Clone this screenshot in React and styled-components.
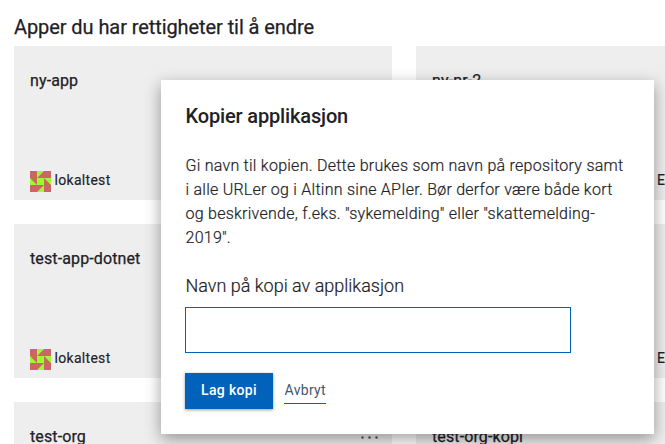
import React from 'react';
import styled, { createGlobalStyle } from 'styled-components';

const GlobalStyle = createGlobalStyle`
  *, *::before, *::after { box-sizing: border-box; }
  body {
    margin: 0;
    background: #fff;
    color: #1e2126;
    font-family: Roboto, "Liberation Sans", sans-serif;
    overflow: hidden;
  }
`;

const Page = styled.main`
  position: relative;
  width: 665px;
  height: 444px;
  overflow: hidden;
  padding: 15px 0 0 14px;
`;

const PageTitle = styled.h2`
  margin: 0 0 7px;
  font-size: 20px;
  font-weight: 400;
  line-height: 24px;
  letter-spacing: -0.08px;
  -webkit-text-stroke: 0.25px currentColor;
`;

const CardGrid = styled.div`
  display: grid;
  grid-template-columns: 378px 378px;
  grid-auto-rows: 154px;
  gap: 24px;
`;

const Card = styled.article`
  display: flex;
  flex-direction: column;
  justify-content: space-between;
  padding: 23px 14px 7px 16px;
  background: #eee;
`;

const CardHeader = styled.div`
  display: flex;
  justify-content: space-between;
  align-items: center;
`;

const CardName = styled.h3`
  margin: 0;
  font-size: 16px;
  font-weight: 400;
  line-height: 24px;
  letter-spacing: 0.12px;
  -webkit-text-stroke: 0.25px currentColor;
`;

const CardFooter = styled.div`
  display: flex;
  align-items: center;
  justify-content: ${(p) => (p.$end ? 'flex-end' : 'flex-start')};
  gap: 3.5px;
  height: 24px;
`;

const Owner = styled.span`
  margin-top: -3px;
  font-size: 14px;
  font-weight: 400;
  line-height: 20px;
  letter-spacing: 0.3px;
  -webkit-text-stroke: 0.15px currentColor;
`;

const EditedBy = styled(Owner)`
  width: 123px;
`;

const Dialog = styled.section`
  position: absolute;
  left: 161px;
  top: 80px;
  width: 493px;
  height: 354px;
  padding: 24px;
  background: #fff;
  box-shadow: 0 5px 15px rgba(0, 0, 0, 0.38);
`;

const DialogTitle = styled.h1`
  margin: 0 0 0 0.5px;
  font-size: 20px;
  font-weight: 500;
  line-height: 24px;
  letter-spacing: -0.15px;
`;

const Description = styled.p`
  margin: 26px 0 0 0.5px;
  font-size: 16px;
  font-weight: 300;
  line-height: 24px;
  letter-spacing: 0.25px;
  white-space: nowrap;
  -webkit-text-stroke: 0.2px currentColor;
`;

const Label = styled.label`
  display: block;
  margin: 24px 0 0 0.5px;
  font-size: 18px;
  font-weight: 300;
  line-height: 24px;
  -webkit-text-stroke: 0.2px currentColor;
`;

const Input = styled.input`
  display: block;
  width: 386px;
  height: 46px;
  margin: 9px 0 20px;
  border: 1px solid #0062ba;
  border-radius: 0;
  background: #fff;
  outline: none;
`;

const Actions = styled.div`
  display: flex;
  gap: 11px;
`;

const PrimaryButton = styled.button`
  width: 88px;
  height: 36px;
  padding: 0 0 2px;
  border: 0;
  background: #0062ba;
  color: #fff;
  font: 500 14px/34px Roboto, sans-serif;
  letter-spacing: 0.35px;
  box-shadow: 0 1px 3px rgba(0, 0, 0, 0.4);
`;

const CancelLink = styled.button`
  align-self: flex-start;
  width: 42px;
  height: 22px;
  margin-top: 9px;
  padding: 0 0 4px 0.5px;
  border: 0;
  border-bottom: 1px solid #0062ba;
  background: none;
  color: #3f5871;
  font: 400 14px/17px Roboto, sans-serif;
  letter-spacing: 0.3px;
  white-space: nowrap;
`;

const Identicon = () => (
  <svg width="21" height="21" viewBox="0 0 21 21">
    <path fill="#cc6664" d="M0 0h21v21H0z" />
    <path fill="#99ff33" d="M7 0h7L7 7zM21 7v7l-7-7zM14 21H7l7-7zM0 14V7l7 7zM7 7h7v7H7z" />
  </svg>
);

const MenuDots = () => (
  <svg width="17" height="4" viewBox="0 0 17 4" fill="#555">
    <circle cx="1.5" cy="2.5" r="1.2" />
    <circle cx="8.5" cy="2.5" r="1.2" />
    <circle cx="15.5" cy="2.5" r="1.2" />
  </svg>
);

const apps = [
  { name: 'ny-app', owner: 'lokaltest' },
  { name: 'ny-nr-2', edited: 'Endre app' },
  { name: 'test-app-dotnet', owner: 'lokaltest' },
  { name: 'test-org-app', edited: 'Endre app' },
  { name: 'test-org', owner: 'lokaltest' },
  { name: 'test-org-kopi', edited: 'Endre app' },
];

export default function App() {
  return (
    <>
      <GlobalStyle />
      <Page>
        <PageTitle>Apper du har rettigheter til å endre</PageTitle>
        <CardGrid>
          {apps.map((app) => (
            <Card key={app.name}>
              <CardHeader>
                <CardName>{app.name}</CardName>
                <MenuDots />
              </CardHeader>
              <CardFooter $end={Boolean(app.edited)}>
                {app.owner && <Identicon />}
                {app.owner ? <Owner>{app.owner}</Owner> : <EditedBy>{app.edited}</EditedBy>}
              </CardFooter>
            </Card>
          ))}
        </CardGrid>
        <Dialog role="dialog">
          <DialogTitle>Kopier applikasjon</DialogTitle>
          <Description>
            Gi navn til kopien. Dette brukes som navn på repository samt
            <br />i alle URLer og i Altinn sine APIer. Bør derfor være både kort
            <br />
            og beskrivende, f.eks. "sykemelding" eller "skattemelding-
            <br />
            2019".
          </Description>
          <Label htmlFor="copy-name">Navn på kopi av applikasjon</Label>
          <Input id="copy-name" />
          <Actions>
            <PrimaryButton>Lag kopi</PrimaryButton>
            <CancelLink>Avbryt</CancelLink>
          </Actions>
        </Dialog>
      </Page>
    </>
  );
}
